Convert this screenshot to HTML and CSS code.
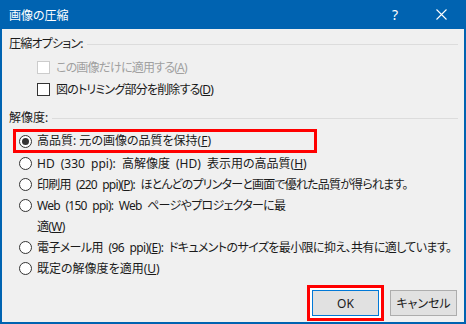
FILE: index.html
```html
<!DOCTYPE html>
<html lang="ja">

<head>
    <meta charset="UTF-8">
    <title>画像の圧縮</title>
    <link rel="stylesheet" href="styles.css">
</head>

<body>
	<div class="dialog">
		<div class="titlebar">
			<span class="title">画像の圧縮</span>
			<span class="help">?</span>
			<span class="close">
				<svg width="11" height="11" viewBox="0 0 11 11"><path d="M0.5 0.5L10.5 10.5M10.5 0.5L0.5 10.5" stroke="#fff" stroke-width="1.1" fill="none"/></svg>
			</span>
		</div>
		<div class="content">
			<div class="group-head"><span class="tighter">圧縮オプション:</span><span class="rule"></span></div>
			<div class="check first disabled"><span class="box"></span><span>この画像だけに適用する(<u>A</u>)</span></div>
			<div class="check"><span class="box"></span><span>図のトリミング部分を削除する(<u>D</u>)</span></div>

			<div class="group-head second"><span>解像度:</span><span class="rule"></span></div>
			<div class="radio marked"><span class="dot on"></span><span class="label">高品質: 元の画像の品質を保持(<u>F</u>)</span></div>
			<div class="radio"><span class="dot"></span><span class="label">HD (330 ppi): 高解像度 (HD) 表示用の高品質(<u>H</u>)</span></div>
			<div class="radio"><span class="dot"></span><span class="label tighter">印刷用 (220 ppi)(<u>P</u>): ほとんどのプリンターと画面で優れた品質が得られます。</span></div>
			<div class="radio"><span class="dot"></span><span class="label tight">Web (150 ppi): Web ページやプロジェクターに最<br>適(<u>W</u>)</span></div>
			<div class="radio"><span class="dot"></span><span class="label loose">電子メール用 (96 ppi)(<u>E</u>): ドキュメントのサイズを最小限に抑え、共有に適しています。</span></div>
			<div class="radio"><span class="dot"></span><span class="label">既定の解像度を適用(<u>U</u>)</span></div>
		</div>
		<div class="buttons">
			<div class="mark"><button class="btn default">OK</button></div>
			<button class="btn">キャンセル</button>
		</div>
	</div>
</body>

</html>
```

FILE: styles.css
```css
html,body,div,span,button{margin:0;padding:0;box-sizing:border-box;}
html,body{width:466px;height:324px;overflow:hidden;}
body{font-family:"Noto Sans","Noto Sans CJK JP",sans-serif;font-size:12px;color:#1a1a1a;background:#f0f0f0;font-feature-settings:"palt";}
u{text-underline-offset:1px;}
/* かなが多い行は詰める */
.tight{letter-spacing:-0.7px;}
.tighter{letter-spacing:-0.8px;}
.loose{letter-spacing:-0.6px;}

.dialog{height:324px;border:2px solid #0063b1;border-top:0;display:flex;flex-direction:column;}

/* タイトルバー */
.titlebar{height:29px;background:#0063b1;color:#fff;display:flex;align-items:center;}
.title{flex:1;padding-left:7px;}
.help,.close{width:46px;height:29px;display:flex;align-items:center;justify-content:center;}
.help{font-size:14px;}

/* 本体 */
.content{padding:5px 6px 0 7px;}
.group-head{display:flex;align-items:center;height:20px;line-height:20px;}
.group-head.second{margin-top:8px;}
.rule{flex:1;height:1px;background:#dcdcdc;margin-left:4px;}

.check{display:flex;align-items:center;height:22px;margin-left:28px;letter-spacing:-0.8px;}
.check.first{margin-top:2px;}
.check .box{width:13px;height:13px;border:1px solid #333;background:#fff;margin-right:6px;}
.check.disabled{color:#a0a0a0;}
.check.disabled .box{border-color:#cccccc;}

.radio{display:flex;align-items:flex-start;line-height:21px;margin-left:10px;}
.radio .label{white-space:nowrap;word-spacing:3px;}
.radio .dot{position:relative;flex:none;width:13px;height:13px;border:1px solid #333;border-radius:50%;background:#fff;margin:4px 5px 0 0;}
.radio .dot.on::after{content:"";position:absolute;left:2px;top:2px;width:7px;height:7px;border-radius:50%;background:#333;}
.radio.marked{width:304px;margin:1px 0 0 4px;padding-left:3px;border:3px solid #ff0000;line-height:18px;}
.radio.marked .label{word-spacing:0;}
.radio.marked .dot{margin-top:2.5px;}

/* ボタン */
.buttons{display:flex;justify-content:flex-end;align-items:center;gap:6px;padding-right:7px;margin-top:6px;}
.mark{border:3px solid #ff0000;padding:2px;background:#fff;}
.btn{width:67px;height:26px;border:1px solid #adadad;background:#e1e1e1;font:inherit;color:#1a1a1a;}
.btn.default{border-color:#0078d7;}
```
